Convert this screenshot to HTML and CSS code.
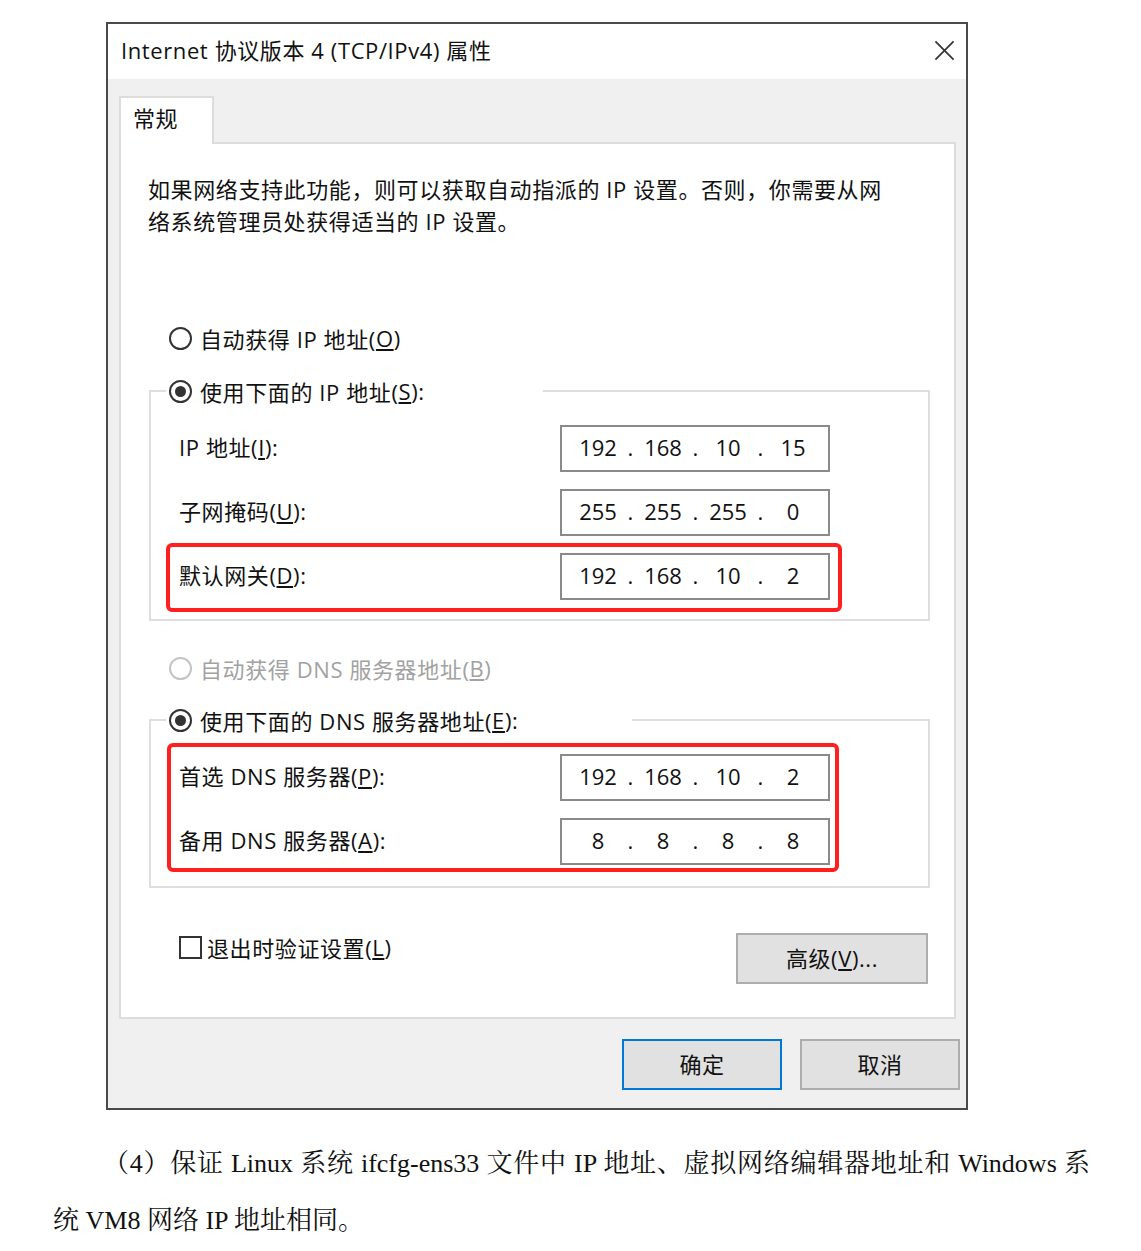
FILE: index.html
```html
<!DOCTYPE html>
<html lang="zh-CN">
<head>
  <meta charset="UTF-8" />
  <title>Internet 协议版本 4 (TCP/IPv4) 属性</title>
  <link rel="stylesheet" href="styles.css">
</head>
<body>
  <!-- 对话框 -->
  <div class="dialog">
    <div class="titlebar">
      <span class="title">Internet 协议版本 4 (TCP/IPv4) 属性</span>
      <svg class="close" viewBox="0 0 22 22"><path d="M1.5 1.5L20.5 20.5M20.5 1.5L1.5 20.5" stroke="#333" stroke-width="1.8" fill="none"/></svg>
    </div>

    <div class="dialog-body">
      <div class="tab">常规</div>
      <div class="panel">
        <div class="desc">如果网络支持此功能，则可以获取自动指派的 IP 设置。否则，你需要从网<br>络系统管理员处获得适当的 IP 设置。</div>

        <!-- IP 地址 -->
        <div class="opt opt-first"><span class="radio"></span>自动获得 IP 地址(<u>O</u>)</div>
        <fieldset class="group group-ip">
          <legend class="legend-ip"><div class="opt"><span class="radio checked"></span>使用下面的 IP 地址(<u>S</u>):</div></legend>
          <div class="row row-first">
            <span>IP 地址(<u>I</u>):</span>
            <div class="ipbox"><span>192</span><i>.</i><span>168</span><i>.</i><span>10</span><i>.</i><span>15</span></div>
          </div>
          <div class="row">
            <span>子网掩码(<u>U</u>):</span>
            <div class="ipbox"><span>255</span><i>.</i><span>255</span><i>.</i><span>255</span><i>.</i><span>0</span></div>
          </div>
          <div class="mark mark-gw">
            <div class="row">
              <span>默认网关(<u>D</u>):</span>
              <div class="ipbox"><span>192</span><i>.</i><span>168</span><i>.</i><span>10</span><i>.</i><span>2</span></div>
            </div>
          </div>
        </fieldset>

        <!-- DNS -->
        <div class="opt opt-dns disabled"><span class="radio"></span>自动获得 DNS 服务器地址(<u>B</u>)</div>
        <fieldset class="group group-dns">
          <legend class="legend-dns"><div class="opt"><span class="radio checked"></span>使用下面的 DNS 服务器地址(<u>E</u>):</div></legend>
          <div class="mark mark-dns">
            <div class="row">
              <span>首选 DNS 服务器(<u>P</u>):</span>
              <div class="ipbox"><span>192</span><i>.</i><span>168</span><i>.</i><span>10</span><i>.</i><span>2</span></div>
            </div>
            <div class="row">
              <span>备用 DNS 服务器(<u>A</u>):</span>
              <div class="ipbox"><span>8</span><i>.</i><span>8</span><i>.</i><span>8</span><i>.</i><span>8</span></div>
            </div>
          </div>
        </fieldset>

        <div class="bottom-row">
          <div class="check-line"><span class="checkbox"></span>退出时验证设置(<u>L</u>)</div>
          <button class="btn btn-adv">高级(<u>V</u>)...</button>
        </div>
      </div>

      <div class="footer">
        <button class="btn btn-ok">确定</button>
        <button class="btn">取消</button>
      </div>
    </div>
  </div>

  <!-- 正文 -->
  <p class="doc-text">（4）保证 Linux 系统 ifcfg-ens33 文件中 IP 地址、虚拟网络编辑器地址和 Windows 系统 VM8 网络 IP 地址相同。</p>
</body>
</html>
```

FILE: styles.css
```css
/* ========== 页面 ========== */
body{margin:0;background:#fff;color:#000;font-family:"Open Sans","Noto Sans CJK SC",sans-serif;}

/* ========== 对话框外框 ========== */
.dialog{width:862px;margin:22px 0 0 106px;border:2px solid #4a4a4a;box-sizing:border-box;background:#f0f0f0;
        letter-spacing:0.6px;}
.titlebar{height:55px;background:#fff;display:flex;align-items:center;justify-content:space-between;
          padding:0 11px 3px 13px;box-sizing:border-box;}
.title{font-size:22px;color:#111;margin-top:-2px;}
.close{width:21px;height:21px;}

.dialog-body{padding:17px 10px 18px 11px;}
.tab{width:95px;height:48px;margin-bottom:-2px;position:relative;z-index:1;background:#fff;
     border:2px solid #dcdcdc;border-bottom:none;box-sizing:border-box;padding-left:12px;
     font-size:22px;line-height:40px;color:#111;}
.panel{height:877px;background:#fff;border:2px solid #dcdcdc;box-sizing:border-box;padding:29px 24px 0 27px;}

/* 说明文字 */
.desc{font-size:22px;line-height:32px;color:#111;}

/* ========== 单选按钮 ========== */
.opt{display:flex;align-items:center;height:32px;font-size:22px;color:#111;white-space:nowrap;}
.opt-first{margin:85px 0 0 21px;}
.opt-dns{margin:31px 0 0 21px;}
.opt.disabled{color:#a2a2a2;}
.radio{width:23px;height:23px;border:2px solid #333;border-radius:50%;box-sizing:border-box;margin-right:8px;
       display:flex;align-items:center;justify-content:center;flex:none;}
.radio.checked::after{content:"";width:11px;height:11px;border-radius:50%;background:#333;}
.disabled .radio{border-color:#c4c4c4;}

/* ========== 分组框 ========== */
.group{margin:0 0 0 1px;width:781px;box-sizing:border-box;border:2px solid #dedede;padding:0 0 0 15px;min-inline-size:0;}
.group-ip{margin-top:21px;padding-bottom:7px;}
.group-dns{margin-top:20px;padding-bottom:14px;}
.group legend{padding:0 0 0 3px;box-sizing:border-box;}
.legend-ip{width:377px;}
.legend-dns{width:466px;}

.row{display:flex;align-items:center;justify-content:space-between;width:651px;height:47px;
     font-size:22px;color:#111;}
.row > span{margin-bottom:6px;}
.row + .row{margin-top:17px;}
.group > .row{margin-left:13px;}
.row-first{margin-top:18px;}

/* IP 输入框 */
.ipbox{display:flex;align-items:center;width:270px;height:47px;border:2px solid #8a8a8a;box-sizing:border-box;
       padding:0 0 4px 11.5px;font-size:22px;color:#111;letter-spacing:0;}
.ipbox span{width:49px;text-align:center;}
.ipbox i{font-style:normal;width:16px;text-align:center;}

/* 红色标注框 */
.mark{border:4px solid #ff1f1f;border-radius:6px;}
.mark-gw{margin-top:7px;padding:6px 7px 8px 9px;width:676px;box-sizing:border-box;}
.mark-dns{margin:7px 0 0 1px;padding:7px 5px 3px 8px;width:672px;box-sizing:border-box;}

/* ========== 底部复选框 + 高级按钮 ========== */
.bottom-row{display:flex;justify-content:space-between;align-items:flex-start;margin:43px 2px 0 31px;}
.check-line{display:flex;align-items:center;height:32px;font-size:22px;color:#111;}
.checkbox{width:23px;height:23px;border:2px solid #333;box-sizing:border-box;margin-right:5px;flex:none;}

.btn{font-family:inherit;font-size:22px;letter-spacing:0.6px;color:#111;background:#e1e1e1;border:2px solid #adadad;
     height:51px;width:160px;padding:0 0 4px;box-sizing:border-box;}
.btn-adv{width:192px;margin-top:2px;}
.btn-ok{border-color:#0078d7;}

.footer{display:flex;justify-content:flex-end;gap:18px;padding-top:20px;margin-right:-4px;}

/* ========== 文档正文 ========== */
.doc-text{margin:25px 51px 0 53px;text-indent:50px;font-size:26px;line-height:57px;text-align:justify;
          font-family:"Liberation Serif","Noto Serif CJK SC","Noto Sans CJK SC",serif;color:#111;}
```
